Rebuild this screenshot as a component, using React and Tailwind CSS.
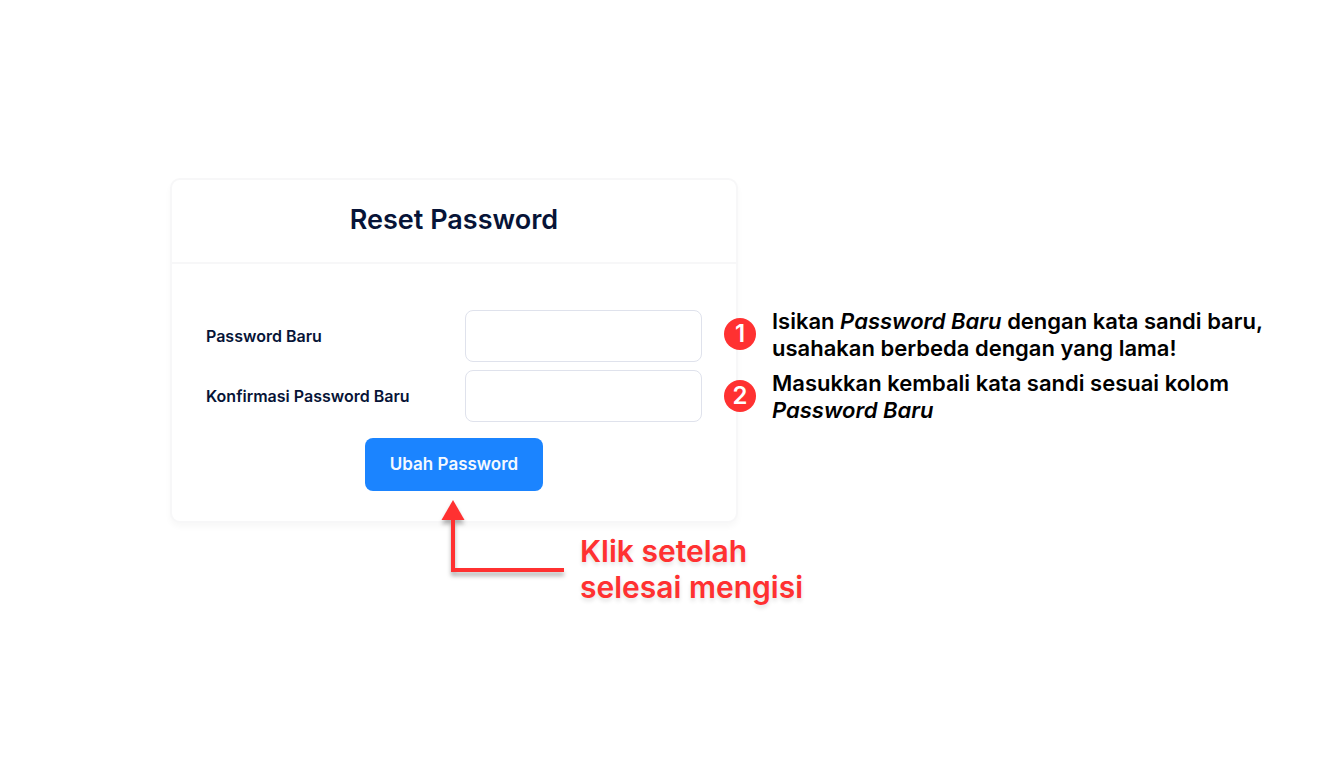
import { useState } from "react";

const fields = [
  { id: "password", label: "Password Baru" },
  { id: "passwordConfirmation", label: "Konfirmasi Password Baru" },
];

const notes = [
  {
    number: 1,
    text: (
      <>
        Isikan <em>Password Baru</em> dengan kata sandi baru,
        <br />
        usahakan berbeda dengan yang lama!
      </>
    ),
  },
  {
    number: 2,
    text: (
      <>
        Masukkan kembali kata sandi sesuai kolom
        <br />
        <em>Password Baru</em>
      </>
    ),
  },
];

const ResetForm = () => {
  const [values, setValues] = useState({ password: "", passwordConfirmation: "" });

  const handleChange = (e) => {
    setValues({ ...values, [e.target.id]: e.target.value });
  };

  return (
    <form
      onSubmit={(e) => e.preventDefault()}
      className="w-full max-w-[568px] rounded-[10px] border-2 border-[#f7f7f8] bg-white shadow-[0_4px_6px_rgba(0,0,0,0.03)]"
    >
      <h1 className="border-b-2 border-[#f7f7f8] pt-5 pb-[23px] text-center text-[27px] leading-[39px] font-semibold text-[#071437]">
        Reset Password
      </h1>

      <div className="px-[34px] pt-[46px] pb-[30px]">
        <div className="flex flex-col gap-2">
          {fields.map((field) => (
            <div key={field.id} className="flex items-center justify-between">
              <label htmlFor={field.id} className="text-base font-semibold text-[#071437]">
                {field.label}
              </label>
              <input
                id={field.id}
                type="password"
                value={values[field.id]}
                onChange={handleChange}
                className="h-[52px] w-[237px] rounded-lg border border-[#dfe2ec] bg-white px-4 outline-none focus:border-[#1b84ff]"
              />
            </div>
          ))}
        </div>

        {/* Submit */}
        <div className="mt-4 flex justify-center">
          <button
            type="submit"
            className="h-[53px] rounded-lg bg-[#1b84ff] px-[25px] text-[17px] font-semibold text-[#f4f9ff]"
          >
            Ubah Password
          </button>
        </div>
      </div>
    </form>
  );
};

const Notes = () => (
  <ol className="z-10 mt-32 -ml-3.5 flex shrink-0 flex-col gap-1.5">
    {notes.map((note) => (
      <li key={note.number} className="flex items-center gap-4">
        <span className="flex size-8 items-center justify-center rounded-full bg-[#ff3131] text-2xl font-semibold text-white">
          {note.number}
        </span>
        <p className="pt-0.5 text-[22px] leading-[27px] font-semibold text-black">{note.text}</p>
      </li>
    ))}
  </ol>
);

const SubmitHint = () => (
  <div className="relative z-10 -mt-[23px] ml-[271px] flex items-end gap-4">
    <svg
      width="123"
      height="73"
      viewBox="0 0 123 73"
      className="mb-8 overflow-visible drop-shadow-[0_4px_2px_rgba(0,0,0,0.3)]"
      aria-hidden="true"
    >
      <path d="M12 0L23.5 20H0.5Z" fill="#ff3131" />
      <path d="M12 18V70H123" fill="none" stroke="#ff3131" strokeWidth="4" />
    </svg>
    <p className="text-[30px] leading-9 font-semibold text-[#ff3131] [text-shadow:0_3px_4px_rgba(0,0,0,0.12)]">
      Klik setelah
      <br />
      selesai mengisi
    </p>
  </div>
);

const App = () => {
  return (
    <main className="min-h-screen bg-white pt-[178px] pl-[170px] font-['Inter',sans-serif]">
      <div className="flex items-start">
        <ResetForm />
        <Notes />
      </div>
      <SubmitHint />
    </main>
  );
};

export default App;
